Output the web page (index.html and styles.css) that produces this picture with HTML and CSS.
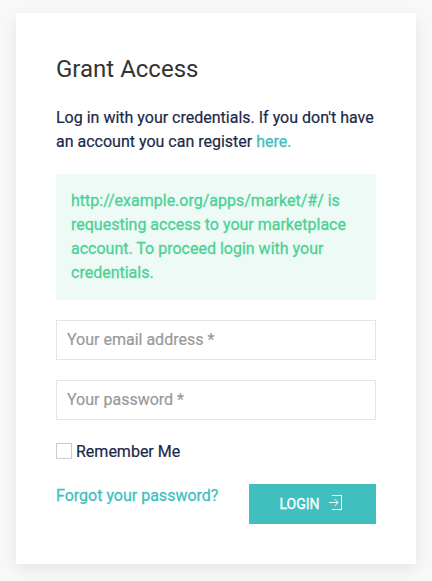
FILE: index.html
```html
<!DOCTYPE html>
<html lang="en">
<head>
<meta charset="utf-8">
<title>Grant Access</title>
<link rel="stylesheet" href="styles.css">
</head>
<body>
<main class="card">
  <h1 class="title">Grant Access</h1>
  <p class="intro">Log in with your credentials. If you don't have an account you can register <a class="link" href="#">here.</a></p>
  <div class="alert">http://example.org/apps/market/#/ is requesting access to your marketplace account. To proceed login with your credentials.</div>
  <form>
    <input class="input" type="email" placeholder="Your email address *">
    <input class="input" type="password" placeholder="Your password *">
    <label class="remember"><input class="checkbox" type="checkbox">Remember Me</label>
    <div class="actions">
      <a class="link" href="#">Forgot your password?</a>
      <button class="button" type="button">Login
        <svg class="icon" width="20" height="20" viewBox="0 0 20 20"><path d="M6 2h10v15H6v-1h9V3H6z" fill="currentColor"/><path d="M8.6 6.1l3.4 3.4-3.4 3.4M3 9.5h9" fill="none" stroke="currentColor"/></svg>
      </button>
    </div>
  </form>
</main>
</body>
</html>
```
FILE: styles.css
```css
* { box-sizing: border-box; }
body {
  margin: 0;
  padding: 13px 16px 17px;
  background: #f8f8f8;
  color: #1b2948;
  font: 400 16px/24px Roboto, sans-serif;
  -webkit-text-stroke: .2px currentColor;
}
.card {
  height: 551px;
  padding: 40px;
  background: #fff;
  box-shadow: 0 5px 15px rgba(0, 0, 0, .08);
}
.title {
  margin: 0 0 20px;
  color: #333;
  font-size: 24px;
  font-weight: 400;
  line-height: 33px;
  -webkit-text-stroke-width: 0;
}
.intro { margin: 0 0 20px; }
.link {
  color: #41bfbf;
  text-decoration: none;
  -webkit-text-stroke-width: .3px;
}
.alert {
  margin-bottom: 20px;
  padding: 15px;
  background: #eefaf6;
  color: #4bd295;
  -webkit-text-stroke-width: .3px;
}
.input {
  display: block;
  width: 100%;
  height: 40px;
  margin-bottom: 20px;
  padding: 0 10px 2px;
  border: 1px solid #e5e5e5;
  border-radius: 0;
  background: #fff;
  font: inherit;
}
.input::placeholder { color: #999; }
.remember { display: flex; align-items: flex-start; gap: 4px; }
.checkbox {
  width: 16px;
  height: 16px;
  margin: 3px 0 0;
  border: 1px solid #ccc;
  appearance: none;
}
.actions {
  display: flex;
  justify-content: space-between;
  align-items: flex-start;
  margin-top: 20px;
}
.button {
  display: flex;
  align-items: center;
  justify-content: space-between;
  width: 127px;
  height: 40px;
  padding: 0 30px 0 30.5px;
  border: 0;
  background: #41bfbf;
  color: #fff;
  font: 400 14px/38px Roboto, sans-serif;
  text-transform: uppercase;
  -webkit-text-stroke-width: .3px;
}
.icon { flex: none; margin-top: -2px; }
```
